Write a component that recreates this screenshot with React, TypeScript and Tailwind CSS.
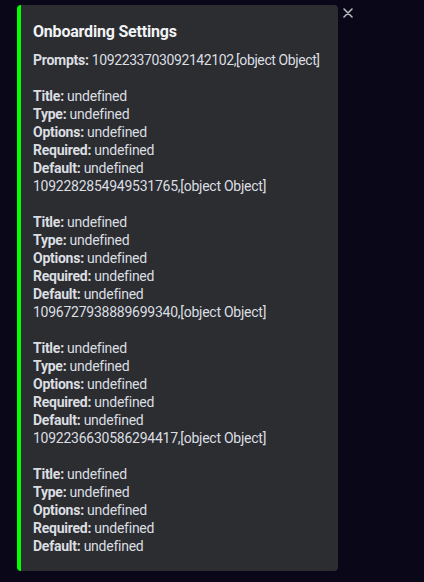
import React from 'react';

const prompts = [
  '1092233703092142102',
  '1092282854949531765',
  '1096727938889699340',
  '1092236630586294417',
];

const fields = ['Title', 'Type', 'Options', 'Required', 'Default'];

const App: React.FC = () => {
  return (
    <div
      className="w-[424px] h-[582px] bg-[#0a0818] pt-[5px] pl-[17px] flex items-start gap-[5px]"
      style={{ fontFamily: 'Roboto, "Noto Sans", sans-serif' }}
    >
      <div className="w-[321px] bg-[#2b2d31] rounded-[4px] border-l-4 border-[#00ff00] pt-4 pr-4 pb-4 pl-3">
        <h3 className="text-base leading-[22px] font-bold tracking-[-0.2px] text-[#f2f3f5]">Onboarding Settings</h3>
        <div className="mt-2 text-sm leading-[18px] tracking-[-0.25px] text-[#dbdee1]">
          <div className="whitespace-nowrap tracking-[-0.4px]">
            <span className="font-bold tracking-[-0.25px]">Prompts:</span> {prompts[0]},[object Object]
          </div>
          {prompts.map((p, i) => (
            <div key={p}>
              <div className="h-[18px]" />
              {fields.map((f) => (
                <div key={f}>
                  <span className="font-bold">{f}:</span> undefined
                </div>
              ))}
              {i < prompts.length - 1 && <div>{prompts[i + 1]},[object Object]</div>}
            </div>
          ))}
        </div>
      </div>
      {/* close button */}
      <button className="mt-[3px] w-[10px] h-[10px] text-[#b5bac1]">
        <svg width="10" height="10" viewBox="0 0 10 10">
          <path d="M1 1L9 9M9 1L1 9" stroke="currentColor" strokeWidth="1.6" strokeLinecap="round" />
        </svg>
      </button>
    </div>
  );
};

export default App;
